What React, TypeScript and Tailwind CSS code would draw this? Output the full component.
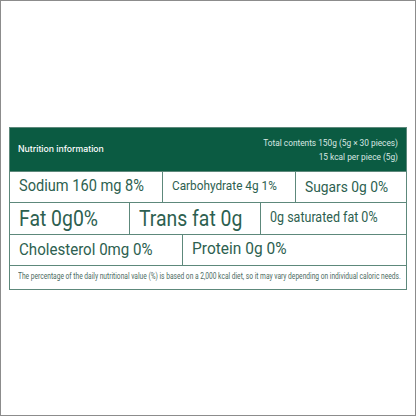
import React from 'react';

const line = 'border-[#5d887b]';

function Cell({ w, size, children, last }: { w?: string; size: string; children: React.ReactNode; last?: boolean }) {
  return (
    <div className={`${w ?? 'flex-1'} ${last ? '' : `border-r ${line}`} flex items-center pl-[9px] ${size} text-[#2d5f50] whitespace-nowrap`}>
      <span className="inline-block scale-y-[1.1]">{children}</span>
    </div>
  );
}

export default function App() {
  return (
    <div className="w-[416px] h-[416px] border border-[#8c8c8c] bg-white pt-[126px] px-[8px]" style={{ fontFamily: 'Roboto, "Noto Sans", sans-serif' }}>
      <div className={`border ${line} bg-white`}>
        <div className="h-[43px] bg-[#0b5b42] flex items-center justify-between px-[8px] text-white">
          <span className="text-[8.7px] font-medium" style={{ fontFamily: 'Inter, sans-serif' }}>Nutrition information</span>
          <div className="text-right text-[8.3px] leading-[14px] text-[#d9e8e2]">
            <div className="scale-y-[1.12]">Total contents 150g (5g × 30 pieces)</div>
            <div className="scale-y-[1.12]">15 kcal per piece (5g)</div>
          </div>
        </div>
        <div className={`flex h-[31px] border-t ${line}`}>
          <Cell w="w-[153px]" size="text-[14.6px]">Sodium 160 mg 8%</Cell>
          <Cell w="w-[133px]" size="text-[11.8px]">Carbohydrate 4g 1%</Cell>
          <Cell size="text-[13.8px]" last>Sugars 0g 0%</Cell>
        </div>
        <div className={`flex h-[32px] border-t ${line}`}>
          <Cell w="w-[120px]" size="text-[19.4px]">Fat 0g0%</Cell>
          <Cell w="w-[131px]" size="text-[19.4px]">Trans fat 0g</Cell>
          <Cell size="text-[12.5px]" last>0g saturated fat 0%</Cell>
        </div>
        <div className={`flex h-[31px] border-t ${line}`}>
          <Cell w="w-[173px]" size="text-[15.1px]">Cholesterol 0mg 0%</Cell>
          <Cell size="text-[15.5px]" last>Protein 0g 0%</Cell>
        </div>
        <div className={`h-[24px] border-t ${line} flex items-center px-[8px] text-[6.65px] text-[#4b6b62] whitespace-nowrap`}>
          <span className="inline-block scale-y-[1.28]">
            The percentage of the daily nutritional value (%) is based on a 2,000 kcal diet, so it may vary depending on individual caloric needs.
          </span>
        </div>
      </div>
    </div>
  );
}
